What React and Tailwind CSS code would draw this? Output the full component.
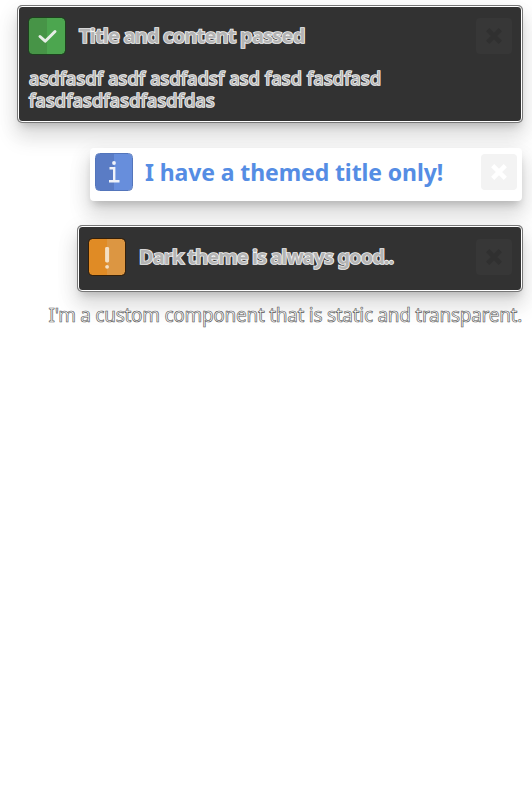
import React from "react";

const font = "font-['Noto_Sans','Open_Sans',sans-serif]";
const shadow = "shadow-[0_0_0_1px_#777,0_14px_20px_3px_rgba(0,0,0,0.10),0_6px_22px_4px_rgba(0,0,0,0.05),0_6px_8px_-3px_rgba(0,0,0,0.2)]";
const outlined = "text-[#b4b4b4] [-webkit-text-stroke:1.7px_#f4f4f4] [paint-order:stroke_fill]";

function Badge({ kind }) {
  const tones = {
    success: ["#479447", "#4ca64f", "#1d421e"],
    info: ["#5a7cc5", "#678edc", "#5375bb"],
    warning: ["#e08b25", "#dc9642", "#352009"],
  };
  const [left, right, edge] = tones[kind];
  return (
    <svg className="block h-[38px] w-[38px] shrink-0" viewBox="0 0 38 38" fill="none">
      <rect x="1" y="1" width="36" height="36" rx="3.5" fill={right} />
      <path d="M19 1H4.500Q1 1 1 4.500V33.500Q1 37 4.500 37H19Z" fill={left} />
      <rect x=".5" y=".5" width="37" height="37" rx="4" stroke={edge} />
      {kind === "success" && <path d="M12 19.500L17.200 24.200L27 14.500" stroke="#e7eee7" strokeWidth="3" strokeLinecap="round" strokeLinejoin="round" />}
      {kind === "info" && (
        <g stroke="#f0f3fa" strokeWidth="2.400">
          <path d="M14.500 15.200H19.200V28M14 28.200H24.500" />
          <circle cx="19" cy="10" r="1.900" fill="#f0f3fa" stroke="none" />
        </g>
      )}
      {kind === "warning" && (
        <g fill="#f4dfc3">
          <rect x="17.100" y="9" width="4" height="15.500" rx="1.400" />
          <circle cx="19.100" cy="28.800" r="1.900" />
        </g>
      )}
    </svg>
  );
}

function Close({ dark }) {
  return (
    <button aria-label="Close" className={`flex h-9 w-9 shrink-0 items-center justify-center rounded ${dark ? "bg-[#373737]" : "bg-[#f3f3f3]"}`}>
      <svg viewBox="0 0 20 20" className="h-[18px] w-[18px]" fill="none" stroke={dark ? "#303030" : "#fff"} strokeWidth="5">
        <path d="M3 3L17 17M17 3L3 17" />
      </svg>
    </button>
  );
}

export default function App() {
  return (
    <main className={`flex h-[800px] w-[532px] flex-col items-end overflow-hidden bg-white pt-[6px] pr-[10px] ${font}`}>
      <section className={`relative h-[116px] w-[504px] shrink-0 rounded-[4px] border border-white bg-[#323232] pt-[10px] pl-[9px] ${shadow}`}>
        <div className="flex items-center pr-[9px]">
          <Badge kind="success" />
          <h2 className={`ml-[13px] grow whitespace-nowrap text-[20px] leading-[28px] font-bold tracking-[-0.8px] ${outlined}`}>Title and content passed</h2>
          <Close dark />
        </div>
        <div className={`mt-[12px] ml-px whitespace-nowrap text-[18px] leading-[22px] ${outlined}`}>
          <p className="tracking-[0.28px]">asdfasdf asdf asdfadsf asd fasd fasdfasd</p>
          <p className="tracking-[0.3px]">fasdfasdfasdfasdfdas</p>
        </div>
      </section>
      <section className="relative mt-[26px] flex h-[53px] w-[432px] shrink-0 items-center rounded-[4px] bg-white pr-[5px] pb-[5px] pl-[5px] shadow-[0_14px_20px_3px_rgba(0,0,0,0.10),0_6px_22px_4px_rgba(0,0,0,0.05),0_6px_8px_-3px_rgba(0,0,0,0.2)]">
        <Badge kind="info" />
        <h2 className="ml-[12px] grow whitespace-nowrap text-[23px] leading-[30px] font-bold tracking-[-0.1px] text-[#558de4]">I have a themed title only!</h2>
        <Close />
      </section>
      <section className={`relative mt-[25px] flex h-[65px] w-[444px] shrink-0 items-center rounded-[4px] border border-white bg-[#323232] pr-[9px] pb-[4px] pl-[9px] ${shadow}`}>
        <Badge kind="warning" />
        <h2 className={`ml-[13px] grow whitespace-nowrap text-[20px] leading-[28px] font-bold tracking-[-0.95px] ${outlined}`}>Dark theme is always good..</h2>
        <Close dark />
      </section>
      <p className="relative mt-[11px] whitespace-nowrap text-[19px] leading-[26px] tracking-[-0.28px] text-white [-webkit-text-stroke:0.65px_#555]">I'm a custom component that is static and transparent.</p>
    </main>
  );
}
